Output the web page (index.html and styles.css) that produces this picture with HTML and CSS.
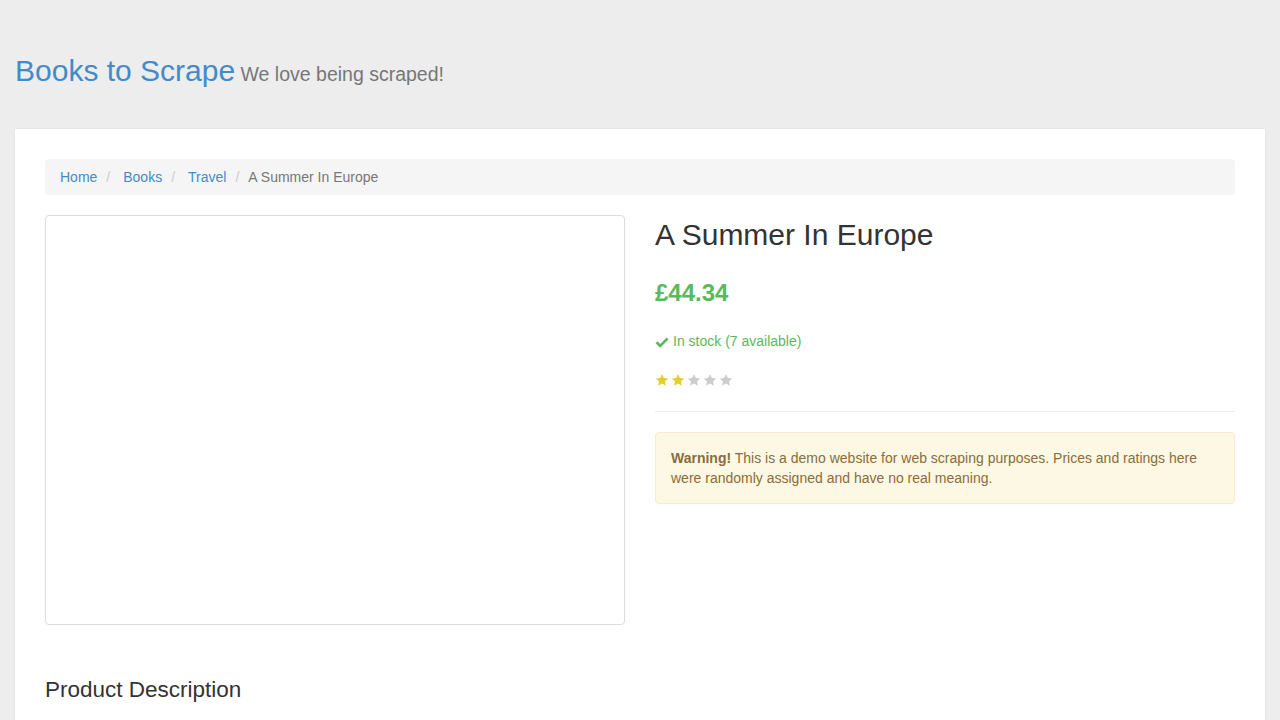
FILE: index.html
```html
<!DOCTYPE html>
<html>
<head>
<meta charset="utf-8">
<link rel="stylesheet" href="styles.css">
</head>
<body>
<header class="header">
  <div class="brand"><a href="#" class="brand-link">Books to Scrape</a><small class="tagline"> We love being scraped!</small></div>
</header>
<div class="page">
  <ul class="breadcrumb">
    <li><a href="#">Home</a></li>
    <li><a href="#">Books</a></li>
    <li><a href="#">Travel</a></li>
    <li class="active">A Summer In Europe</li>
  </ul>
  <div class="product">
    <div class="col">
      <div class="thumbnail"></div>
    </div>
    <div class="col main">
      <h1 class="title">A Summer In Europe</h1>
      <p class="price">£44.34</p>
      <p class="stock"><svg class="check" viewBox="0 0 14 14" width="14" height="14"><path d="M1.5 7.2 L5.2 10.8 L12.5 3.5" fill="none" stroke="#5cb85c" stroke-width="2.6" stroke-linejoin="miter"/></svg>In stock (7 available)</p>
      <p class="rating">
        <svg class="star on" viewBox="0 0 24 24"><path d="M12 1.5l3.2 7.1 7.6.7-5.8 5.1 1.8 7.6L12 18l-6.8 4 1.8-7.6L1.2 9.3l7.6-.7z"/></svg><svg class="star on" viewBox="0 0 24 24"><path d="M12 1.5l3.2 7.1 7.6.7-5.8 5.1 1.8 7.6L12 18l-6.8 4 1.8-7.6L1.2 9.3l7.6-.7z"/></svg><svg class="star" viewBox="0 0 24 24"><path d="M12 1.5l3.2 7.1 7.6.7-5.8 5.1 1.8 7.6L12 18l-6.8 4 1.8-7.6L1.2 9.3l7.6-.7z"/></svg><svg class="star" viewBox="0 0 24 24"><path d="M12 1.5l3.2 7.1 7.6.7-5.8 5.1 1.8 7.6L12 18l-6.8 4 1.8-7.6L1.2 9.3l7.6-.7z"/></svg><svg class="star" viewBox="0 0 24 24"><path d="M12 1.5l3.2 7.1 7.6.7-5.8 5.1 1.8 7.6L12 18l-6.8 4 1.8-7.6L1.2 9.3l7.6-.7z"/></svg>
      </p>
      <hr class="rule">
      <div class="alert"><strong>Warning!</strong> This is a demo website for web scraping purposes. Prices and ratings here were randomly assigned and have no real meaning.</div>
    </div>
  </div>
  <h2 class="sub-header">Product Description</h2>
</div>
</body>
</html>
```
FILE: styles.css
```css
* { box-sizing: border-box; }
html, body { margin: 0; padding: 0; }
body {
  background: #ededed;
  font-family: "Liberation Sans", Arial, sans-serif;
  font-size: 14px;
  line-height: 1.42857;
  color: #333;
  height: 720px;
  overflow: hidden;
}
a { color: #428bca; text-decoration: none; }
.header {
  padding: 54px 15px 16px;
}
.brand {
  font-size: 30px;
  line-height: 1.1;
  margin: 0;
  height: 59px;
}
.brand-link { color: #428bca; }
.tagline {
  font-size: 65%;
  color: #777;
}
.page {
  margin: 0 15px;
  background: #fff;
  padding: 30px;
  min-height: 700px;
  box-shadow: 0 0 2px rgba(0,0,0,0.08);
}
.breadcrumb {
  list-style: none;
  margin: 0 0 20px;
  padding: 9px 15px 7px;
  background: #f5f5f5;
  border-radius: 4px;
  display: flex;
}
.breadcrumb li + li::before {
  content: "/";
  padding: 0 5px;
  color: #ccc;
  margin-right: 8px;
}
.breadcrumb li + li { margin-left: 4px; }
.breadcrumb li.active::before { margin-right: 4px; }
.breadcrumb .active { color: #777; }
.product {
  display: grid;
  grid-template-columns: 1fr 1fr;
  gap: 30px;
}
.thumbnail {
  height: 410px;
  border: 1px solid #ddd;
  border-radius: 4px;
  background: #fff;
}
.title {
  font-size: 30px;
  font-weight: 500;
  line-height: 1.1;
  margin: 0 0 25px;
  padding-top: 3px;
}
.price {
  color: #5cb85c;
  font-size: 24px;
  font-weight: bold;
  margin: 0 0 22px;
  line-height: 1.4;
}
.stock {
  color: #5cb85c;
  margin: 0 0 18px;
  display: flex;
  align-items: center;
}
.check { margin-right: 4px; }
.rating {
  margin: 0;
  height: 21px;
  display: flex;
  align-items: center;
  gap: 2px;
}
.star { width: 14px; height: 14px; fill: #ccc; }
.star.on { fill: #e6ce31; }
.rule {
  border: 0;
  border-top: 1px solid #eee;
  margin: 20px 0;
}
.alert {
  background: #fcf8e3;
  border: 1px solid #faebcc;
  color: #8a6d3b;
  padding: 16px 15px 14px;
  border-radius: 4px;
}
.sub-header {
  font-size: 22.5px;
  font-weight: 500;
  line-height: 1.1;
  margin: 53px 0 0;
}
```
